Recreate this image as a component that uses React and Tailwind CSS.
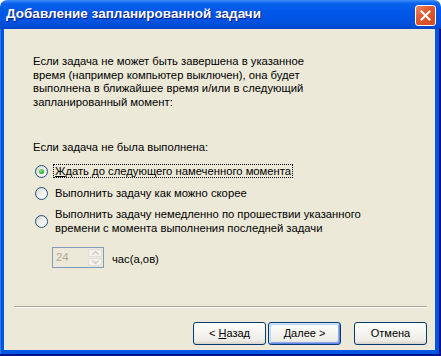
import React from 'react';

const Radio = ({ checked }) => (
  <span className="w-[13px] h-[13px] shrink-0 rounded-full border border-[#1C5180] bg-[linear-gradient(135deg,#D6D5CC_0%,#F4F3EE_55%,#FFFFFF_100%)] flex items-center justify-center">
    {checked && (
      <span className="w-[5px] h-[5px] rounded-full bg-[radial-gradient(circle_at_40%_35%,#8EE88B_0%,#2FB12C_60%,#1C8A19_100%)]" />
    )}
  </span>
);

const XpButton = ({ children, isDefault }) => (
  <button
    className={
      'w-[73px] h-[23px] rounded-[3px] border border-[#003C74] text-[11px] text-black flex items-center justify-center ' +
      'bg-[linear-gradient(to_bottom,#FFFFFF_0%,#F6F5F1_45%,#ECEBE6_85%,#D6D0C5_100%)] ' +
      (isDefault
        ? 'shadow-[inset_1px_1px_0_#CEE7FF,inset_-1px_-1px_0_#6982EE,inset_2px_2px_0_#BCD4F6,inset_-2px_-2px_0_#89ADE4]'
        : '')
    }
  >
    {children}
  </button>
);

const SpinBox = () => (
  <div className="w-[52px] h-[21px] border border-[#7F9DB9] bg-[#ECE9D8] flex items-stretch">
    <span className="flex-1 pl-[3px] flex items-center text-[#ACA899]">24</span>
    <div className="w-[16px] flex flex-col gap-px p-px">
      <div className="flex-1 rounded-[2px] border border-[#E0DED5] bg-[#F3F2EE] flex items-center justify-center">
        <svg width="7" height="4" viewBox="0 0 7 4">
          <path d="M0.5 3.5 L3.5 0.5 L6.5 3.5" fill="none" stroke="#C9C7BA" strokeWidth="1.2" />
        </svg>
      </div>
      <div className="flex-1 rounded-[2px] border border-[#E0DED5] bg-[#F3F2EE] flex items-center justify-center">
        <svg width="7" height="4" viewBox="0 0 7 4">
          <path d="M0.5 0.5 L3.5 3.5 L6.5 0.5" fill="none" stroke="#C9C7BA" strokeWidth="1.2" />
        </svg>
      </div>
    </div>
  </div>
);

export default function App() {
  return (
    <div className="w-[441px] h-[356px] flex flex-col bg-white font-['Liberation_Sans',Arial,sans-serif] text-[11.25px] text-black">
      {/* title bar */}
      <div className="h-[29px] shrink-0 rounded-t-[7px] bg-[linear-gradient(to_bottom,#3D8FF6_0%,#0A62EE_12%,#0058E8_35%,#0054E3_65%,#004ED8_88%,#0043C4_100%)] flex items-center justify-between pl-[6px] pr-[5px]">
        <span className="text-white font-bold text-[13.5px] [text-shadow:1px_1px_0_#0A1883]">
          Добавление запланированной задачи
        </span>
        <div className="w-[21px] h-[21px] mt-[1px] rounded-[3px] border border-white bg-[linear-gradient(135deg,#F0896A_0%,#E05A30_40%,#D24A1E_100%)] flex items-center justify-center">
          <svg width="11" height="11" viewBox="0 0 11 11">
            <path d="M1.5 1.5 L9.5 9.5 M9.5 1.5 L1.5 9.5" stroke="white" strokeWidth="2" strokeLinecap="square" />
          </svg>
        </div>
      </div>

      {/* frame */}
      <div className="flex-1 flex bg-[#0055E5] pl-[4px] pr-[6px] pb-[6px] shadow-[inset_-2px_0_0_#00138C,inset_0_-2px_0_#00138C,inset_1px_0_0_#2E7BF5]">
        <div className="flex-1 bg-[#ECE9D8] flex flex-col">
          <p className="mt-[26px] ml-[29px] leading-[13.5px]">
            Если задача не может быть завершена в указанное
            <br />
            время (например компьютер выключен), она будет
            <br />
            выполнена в ближайшее время и/или в следующий
            <br />
            запланированный момент:
          </p>

          <p className="mt-[32px] ml-[29px] leading-[13px]">Если задача не была выполнена:</p>

          <div className="mt-[10px] ml-[31px] h-[14px] flex items-center gap-[5px]">
            <Radio checked />
            <span className="leading-[12px] border border-dotted border-black px-px">
              <u>Ж</u>дать до следующего намеченного момента
            </span>
          </div>

          <div className="mt-[8px] ml-[31px] h-[14px] flex items-center gap-[5px]">
            <Radio />
            <span className="pl-[2px]">Выполнить задачу как можно скорее</span>
          </div>

          <div className="mt-[8px] ml-[31px] flex items-center gap-[5px]">
            <Radio />
            <span className="pl-[2px] leading-[13.5px]">
              Выполнить задачу немедленно по прошествии указанного
              <br />
              времени с момента выполнения последней задачи
            </span>
          </div>

          <div className="mt-[12px] ml-[48px] flex items-center gap-[8px]">
            <SpinBox />
            <span className="pt-[3px]">час(а,ов)</span>
          </div>

          <div className="mt-auto mr-[8px] ml-[10px] border-t border-t-[#ACA899] border-b border-b-white" />

          <div className="mt-[14px] mb-[5px] mr-[8px] flex justify-end">
            <XpButton>
              &lt;&nbsp;<u>Н</u>азад
            </XpButton>
            <div className="w-[2px]" />
            <XpButton isDefault>
              <u>Д</u>алее&nbsp;&gt;
            </XpButton>
            <div className="w-[13px]" />
            <XpButton>Отмена</XpButton>
          </div>
        </div>
      </div>
    </div>
  );
}
